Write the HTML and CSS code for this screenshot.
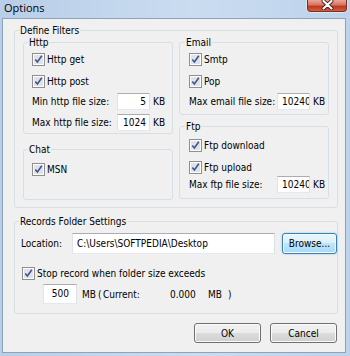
FILE: index.html
```html
<!DOCTYPE html>
<html>
<head>
<meta charset="utf-8">
<link rel="stylesheet" href="styles.css">
</head>
<body>
<div class="window">
  <div class="titlebar">
    <span class="title">Options</span>
    <span class="close"><svg width="13" height="10" viewBox="0 0 13 10"><path d="M2.5 1L10.5 8.5M10.5 1L2.5 8.5" stroke="#4a1a12" stroke-width="3.8" stroke-linecap="round"/><path d="M2.5 1L10.5 8.5M10.5 1L2.5 8.5" stroke="#fff" stroke-width="2.1" stroke-linecap="round"/></svg></span>
  </div>
  <div class="client">
    <div class="grp filters">
      <span class="cap">Define Filters</span>
      <div class="cols">
        <div class="col">
          <div class="grp http">
            <span class="cap">Http</span>
            <div class="chk m4"><svg class="cbx" width="13" height="13" viewBox="0 0 13 13"><rect x=".5" y=".5" width="12" height="12" fill="#fdfdfd" stroke="#8f8f8f"/><rect x="2" y="2" width="9" height="9" fill="#e0e2e6"/><path d="M3.3 6.4l2.1 2.5 4.4-6.1" fill="none" stroke="#3b5494" stroke-width="1.6"/></svg><span>Http get</span></div>
            <div class="chk m9"><svg class="cbx" width="13" height="13" viewBox="0 0 13 13"><rect x=".5" y=".5" width="12" height="12" fill="#fdfdfd" stroke="#8f8f8f"/><rect x="2" y="2" width="9" height="9" fill="#e0e2e6"/><path d="M3.3 6.4l2.1 2.5 4.4-6.1" fill="none" stroke="#3b5494" stroke-width="1.6"/></svg><span>Http post</span></div>
            <div class="field m5"><span class="lbl">Min http file size:</span><span class="edit">5</span><span class="unit">KB</span></div>
            <div class="field m4"><span class="lbl">Max http file size:</span><span class="edit">1024</span><span class="unit">KB</span></div>
          </div>
          <div class="grp chat">
            <span class="cap">Chat</span>
            <div class="chk m7"><svg class="cbx" width="13" height="13" viewBox="0 0 13 13"><rect x=".5" y=".5" width="12" height="12" fill="#fdfdfd" stroke="#8f8f8f"/><rect x="2" y="2" width="9" height="9" fill="#e0e2e6"/><path d="M3.3 6.4l2.1 2.5 4.4-6.1" fill="none" stroke="#3b5494" stroke-width="1.6"/></svg><span>MSN</span></div>
          </div>
        </div>
        <div class="col">
          <div class="grp email">
            <span class="cap">Email</span>
            <div class="chk m4"><svg class="cbx" width="13" height="13" viewBox="0 0 13 13"><rect x=".5" y=".5" width="12" height="12" fill="#fdfdfd" stroke="#8f8f8f"/><rect x="2" y="2" width="9" height="9" fill="#e0e2e6"/><path d="M3.3 6.4l2.1 2.5 4.4-6.1" fill="none" stroke="#3b5494" stroke-width="1.6"/></svg><span>Smtp</span></div>
            <div class="chk m9"><svg class="cbx" width="13" height="13" viewBox="0 0 13 13"><rect x=".5" y=".5" width="12" height="12" fill="#fdfdfd" stroke="#8f8f8f"/><rect x="2" y="2" width="9" height="9" fill="#e0e2e6"/><path d="M3.3 6.4l2.1 2.5 4.4-6.1" fill="none" stroke="#3b5494" stroke-width="1.6"/></svg><span>Pop</span></div>
            <div class="field m5"><span class="lbl wide">Max email file size:</span><span class="edit">10240</span><span class="unit">KB</span></div>
          </div>
          <div class="grp ftp">
            <span class="cap">Ftp</span>
            <div class="chk m6"><svg class="cbx" width="13" height="13" viewBox="0 0 13 13"><rect x=".5" y=".5" width="12" height="12" fill="#fdfdfd" stroke="#8f8f8f"/><rect x="2" y="2" width="9" height="9" fill="#e0e2e6"/><path d="M3.3 6.4l2.1 2.5 4.4-6.1" fill="none" stroke="#3b5494" stroke-width="1.6"/></svg><span>Ftp download</span></div>
            <div class="chk m9"><svg class="cbx" width="13" height="13" viewBox="0 0 13 13"><rect x=".5" y=".5" width="12" height="12" fill="#fdfdfd" stroke="#8f8f8f"/><rect x="2" y="2" width="9" height="9" fill="#e0e2e6"/><path d="M3.3 6.4l2.1 2.5 4.4-6.1" fill="none" stroke="#3b5494" stroke-width="1.6"/></svg><span>Ftp upload</span></div>
            <div class="field m2"><span class="lbl wide">Max ftp file size:</span><span class="edit">10240</span><span class="unit">KB</span></div>
          </div>
        </div>
      </div>
    </div>
    <div class="grp records">
      <span class="cap">Records Folder Settings</span>
      <div class="locrow"><span class="loclbl">Location:</span><span class="edit path">C:\Users\SOFTPEDIA\Desktop</span><span class="btn browse">Browse...</span></div>
      <div class="chk stop"><svg class="cbx" width="13" height="13" viewBox="0 0 13 13"><rect x=".5" y=".5" width="12" height="12" fill="#fdfdfd" stroke="#8f8f8f"/><rect x="2" y="2" width="9" height="9" fill="#e0e2e6"/><path d="M3.3 6.4l2.1 2.5 4.4-6.1" fill="none" stroke="#3b5494" stroke-width="1.6"/></svg><span>Stop record when folder size exceeds</span></div>
      <div class="sizerow"><span class="edit e500">500</span><span class="t1">MB</span><span class="t2">(</span><span class="t3">Current:</span><span class="t4">0.000</span><span class="t5">MB</span><span class="t6">)</span></div>
    </div>
    <div class="buttons"><span class="btn">OK</span><span class="btn">Cancel</span></div>
  </div>
</div>
</body>
</html>
```
FILE: styles.css
```css
* { box-sizing: border-box; }
html, body { margin: 0; padding: 0; }
body {
  width: 350px;
  height: 356px;
  overflow: hidden;
  font-family: "DejaVu Sans Condensed", "Liberation Sans", sans-serif;
  font-size: 10px;
  line-height: 13px;
  color: #000;
}
.window {
  width: 350px;
  height: 356px;
  background: linear-gradient(to right, #b8cee8, #cadcf0 55%, #bdd3ec);
  display: flex;
  flex-direction: column;
}
.titlebar {
  height: 18px;
  display: flex;
  justify-content: space-between;
  align-items: flex-start;
}
.title {
  font-family: "Open Sans", "Liberation Sans", sans-serif;
  font-size: 11px;
  line-height: 16px;
  padding-left: 4px;
}
.close {
  width: 40px;
  height: 12px;
  margin-right: 3px;
  border: 1px solid #7e2b1e;
  border-top: 0;
  border-radius: 0 0 4px 4px;
  background: linear-gradient(#e9a696, #d8735f 45%, #c2381f 58%, #d0603f);
  display: flex;
  justify-content: center;
  align-items: flex-start;
  box-shadow: 0 0 0 1px rgba(255,255,255,.45);
}
.client {
  margin: 0 4px 0 2px;
  height: 335px;
  border: 1px solid #8ea2b9;
  background: #f0f0f0;
  padding: 11px 7px 0 11px;
}
.grp {
  border: 1px solid #d5dfe5;
  border-radius: 3px;
}
.cap {
  display: block;
  width: fit-content;
  height: 13px;
  margin: -7px 0 0 -4px;
  padding: 0 1px;
  background: #f0f0f0;
  white-space: nowrap;
}
.filters { width: 324px; padding: 0 8px 7px 8px; }
.cols { display: flex; gap: 6px; margin-top: 5px; align-items: flex-start; }
.col { width: 150px; display: flex; flex-direction: column; }
.http { padding: 0 0 2px 8px; }
.chat { margin-top: 15px; padding: 0 0 23px 8px; }
.email { padding: 0 0 4px 9px; }
.ftp { margin-top: 11px; padding: 0 0 5px 9px; }
.m2 { margin-top: 2px; }
.m4 { margin-top: 4px; }
.m5 { margin-top: 5px; }
.m6 { margin-top: 6px; }
.m7 { margin-top: 7px; }
.m9 { margin-top: 9px; }
.chk {
  display: flex;
  align-items: center;
  height: 13px;
  gap: 2px;
  white-space: nowrap;
}
.cbx { flex: none; display: block; }
.field { display: flex; align-items: center; height: 17px; white-space: nowrap; }
.lbl { width: 85px; }
.lbl.wide { width: 88px; }
.edit {
  display: block;
  flex: none;
  width: 33px;
  height: 17px;
  background: #fff;
  border: 1px solid;
  border-color: #abadb3 #dbdfe6 #e3e9ef #e2e3ea;
  text-align: right;
  padding: 0 3px 0 4px;
  line-height: 15px;
  overflow: hidden;
  white-space: nowrap;
}
.unit { margin-left: 3px; }
.records { margin-top: 13px; width: 324px; padding: 0 0 9px 6px; }
.records .cap { margin-left: -2px; }
.locrow { display: flex; align-items: center; height: 21px; margin-top: 5px; }
.loclbl { width: 51px; flex: none; }
.path { width: 203px; height: 21px; line-height: 19px; text-align: left; padding-left: 4px; }
.btn {
  display: flex;
  align-items: center;
  justify-content: center;
  flex: none;
  width: 67px;
  height: 20px;
  border: 1px solid #707070;
  border-radius: 3px;
  background: linear-gradient(#f2f2f2, #ebebeb 50%, #dddddd 50%, #cfcfcf);
  box-shadow: inset 0 0 0 1px #fbfbfb;
}
.browse {
  margin-left: 7px;
  width: 55px;
  height: 21px;
  border-color: #3c7fb1;
  background: linear-gradient(#eaf6fd, #d9f0fc 50%, #bee6fd 50%, #a7d9f5);
  box-shadow: inset 0 0 0 1px #f4fbff, 0 0 2px #7ec4ec;
}
.stop { margin-top: 13px; margin-left: 1px; }
.sizerow { display: flex; align-items: center; height: 20px; margin-top: 4px; white-space: nowrap; }
.e500 { margin-left: 22px; width: 34px; height: 20px; line-height: 18px; padding-right: 7px; }
.sizerow span { flex: none; }
.t1 { margin-left: 5px; width: 16px; }
.t2 { width: 5px; }
.t3 { width: 67px; }
.t4 { width: 38px; }
.t5 { width: 20px; }
.buttons { display: flex; justify-content: flex-end; gap: 9px; margin-top: 9px; padding-right: 1px; }
```
